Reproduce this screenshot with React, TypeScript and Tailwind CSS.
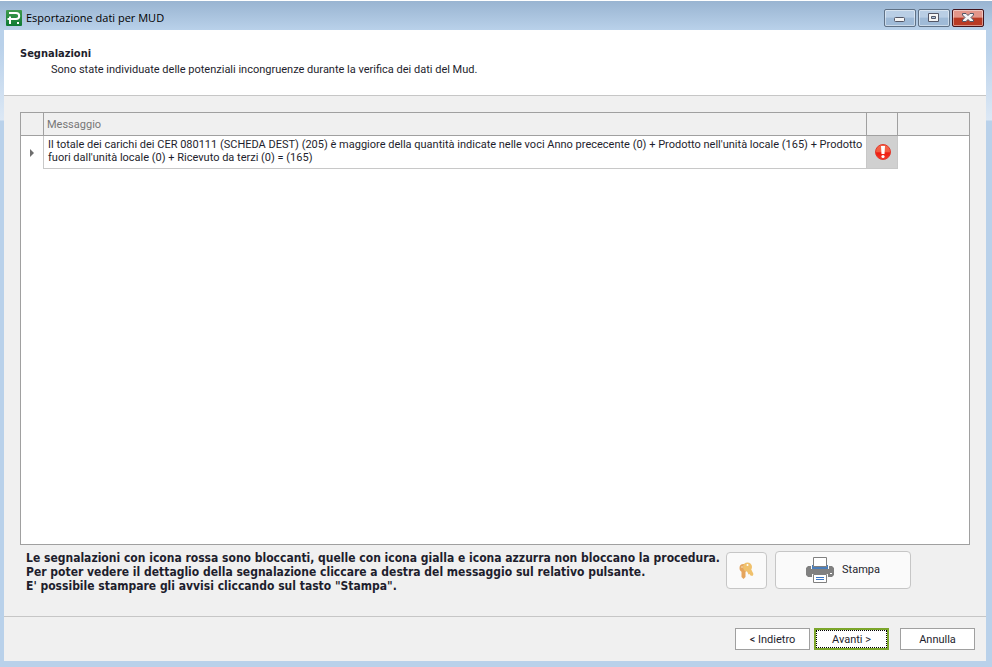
import type { ReactNode } from "react";

const PrinterIcon = () => (
  <svg width="28" height="26" viewBox="0 0 28 26" aria-hidden="true">
    <path d="M2 9h24l2 2v7l-2 2H2l-2-2v-7z" fill="#808080" />
    <path d="M5 8h18v4H5z" fill="#fafafa" />
    <path d="M6 8h16v4H6z" fill="#4a7ebb" />
    <path d="M7.5.5h13v9h-13z" fill="#fff" stroke="#808080" />
    <path d="M6 17h16v3H6z" fill="#fafafa" />
    <path d="M7.5 17.5h13v8h-13z" fill="#fff" stroke="#808080" />
    <path d="M10 20h8v1h-8zM10 22h8v1h-8z" fill="#3a76c4" />
    <path d="M24 16h2v1h-2z" fill="#fff" />
  </svg>
);

const KeysIcon = () => (
  <svg width="16" height="18" viewBox="0 0 16 18" aria-hidden="true">
    <circle cx="4.5" cy="6" r="4" fill="#e5a45c" />
    <path d="M2.5 8h4v7l-2 2-2-2z" fill="#e5a45c" />
    <circle cx="8.5" cy="5" r="4.5" fill="#f0c16c" />
    <path d="M7.5 8l4-2 3 6-1 2-2-.5-1-1.5-1 .5z" fill="#f0c16c" />
    <circle cx="8.5" cy="3" r="1" fill="#fff" />
    <circle cx="3" cy="5" r=".8" fill="#f8e3c8" />
  </svg>
);

const ErrorIcon = () => (
  <svg width="16" height="16" viewBox="0 0 16 16" role="img" aria-label="Bloccante">
    <defs>
      <linearGradient id="err" x1="0" y1="0" x2="0" y2="1">
        <stop offset="0" stopColor="#f4694c" />
        <stop offset=".5" stopColor="#f25a40" />
        <stop offset=".55" stopColor="#ee1c10" />
        <stop offset="1" stopColor="#f23a2a" />
      </linearGradient>
    </defs>
    <circle cx="8" cy="8" r="7.5" fill="url(#err)" stroke="#e2382c" />
    <path d="M6 2h4l-.5 8h-3z" fill="#fff" />
    <circle cx="8" cy="12.5" r="1.6" fill="#fff" />
  </svg>
);

const AppLogo = () => (
  <svg width="16" height="16" viewBox="0 0 16 16" aria-hidden="true">
    <defs>
      <linearGradient id="logo" x1="0" y1="0" x2="0" y2="1">
        <stop offset="0" stopColor="#3f9a4c" />
        <stop offset="1" stopColor="#0e7a35" />
      </linearGradient>
    </defs>
    <rect width="16" height="16" rx="1" fill="url(#logo)" />
    <path d="M3 3h7q3.2 0 3.2 3T10 9H1.5" fill="none" stroke="#fff" strokeWidth="2" />
    <path d="M4 6.5V14" stroke="#fff" strokeWidth="2" />
    <path d="M11 12h2v2h-2z" fill="#fff" />
  </svg>
);

const captionBase =
  "flex h-[18px] w-8 items-center justify-center rounded-[2px] border shadow-[inset_0_0_0_1px_rgba(255,255,255,0.45)]";
const captionBlue = `${captionBase} border-[#5f7186] bg-linear-to-b from-[#b9cee5] from-45% to-[#9fbad7] to-50%`;
const captionRed = `${captionBase} border-[#43141c] bg-linear-to-b from-[#e2968a] from-45% to-[#b93a24] to-50%`;

const TitleBar = () => (
  <header className="flex h-[29px] items-center gap-1 pt-1 pr-0.5 pl-0.5">
    <AppLogo />
    <h1 className="flex-1 font-['Open_Sans',sans-serif] text-[11px] leading-4 text-black">
      Esportazione dati per MUD
    </h1>
    <div className="flex gap-0.5">
      <button aria-label="Riduci" className={captionBlue}>
        <svg width="12" height="10" viewBox="0 0 12 10">
          <rect x=".5" y="4.5" width="10" height="4" rx="1" fill="#f5f5f5" stroke="#535666" />
        </svg>
      </button>
      <button aria-label="Ingrandisci" className={captionBlue}>
        <svg width="12" height="10" viewBox="0 0 12 10">
          <path d="M.5.5h10v8H.5zM3.5 3.5v2h4v-2z" fillRule="evenodd" fill="#f5f5f5" stroke="#535666" />
        </svg>
      </button>
      <button aria-label="Chiudi" className={captionRed}>
        <svg width="12" height="10" viewBox="0 0 12 10">
          <path
            d="M.5.5H4l2 2 2-2h3.5V2L9 4.5 11.5 7v1.5H8l-2-2-2 2H.5V7L3 4.5.5 2z"
            fill="#f5f5f5"
            stroke="#535666"
          />
        </svg>
      </button>
    </div>
  </header>
);

const MessageGrid = () => (
  <div className="flex-1 border border-[#a0a0a0] bg-white">
    <table className="w-full table-fixed border-separate border-spacing-0 text-left">
      <colgroup>
        <col className="w-[23px]" />
        <col />
        <col className="w-[31px]" />
        <col className="w-[71px]" />
      </colgroup>
      <thead>
        <tr className="h-[23px] bg-[#f0f0f0]">
          <th className="border-r border-b border-[#a0a0a0]" />
          <th scope="col" className="border-r border-b border-[#a0a0a0] px-[3px] pt-0.5 font-normal text-[#777]">
            Messaggio
          </th>
          <th className="border-r border-b border-[#a0a0a0]" />
          <th className="border-b border-[#a0a0a0]" />
        </tr>
      </thead>
      <tbody>
        <tr className="h-[33px]">
          <td className="border-r border-[#c8c8c8]">
            <svg width="4" height="8" viewBox="0 0 4 8" className="mx-auto" aria-hidden="true">
              <path d="M0 0l4 4-4 4z" fill="#6e6e6e" />
            </svg>
          </td>
          <td className="border-r border-b border-[#c8c8c8] pl-1 align-top leading-[13px]">
            <p className="pt-0.5">
              Il totale dei carichi dei CER 080111 (SCHEDA DEST) (205) è maggiore della quantità indicate nelle
              voci Anno prececente (0) + Prodotto nell'unità locale (165) + Prodotto fuori dall'unità locale (0) +
              Ricevuto da terzi (0) = (165)
            </p>
          </td>
          <td className="border-r border-b border-[#c8c8c8] bg-[#d0d0d0] pl-0.5">
            <div className="flex justify-center">
              <ErrorIcon />
            </div>
          </td>
          <td />
        </tr>
      </tbody>
    </table>
  </div>
);

const WizardButton = ({ children }: { children: ReactNode }) => (
  <button className="h-[22px] w-[75px] border border-[#a0a0a0] bg-white pt-0.5">{children}</button>
);

export default function App() {
  return (
    <div className="flex min-h-screen flex-col border-t border-white bg-[linear-gradient(to_bottom,#99b4d1_0,#b9d1ea_29px,#b9d1ea_45px,#dce8f5_119px,#b9d1ea_120px)] pr-1.5 pb-1.5 pl-1 font-[Roboto,sans-serif] text-[11px] text-[#1e1e2d]">
      <TitleBar />
      <main className="flex flex-1 flex-col bg-[#f0f0f0]">
        <section className="h-[66px] border-b border-[#c6c6c6] bg-white px-4 pt-4 leading-4">
          <h2 className="font-['DejaVu_Sans_Condensed','DejaVu_Sans',sans-serif] font-bold">Segnalazioni</h2>
          <p className="pl-[31px]">
            Sono state individuate delle potenziali incongruenze durante la verifica dei dati del Mud.
          </p>
        </section>
        <section className="flex flex-1 flex-col px-4 pt-4">
          <MessageGrid />
          <div className="flex h-[71px] items-start gap-2 pt-1.5 pl-1.5">
            <p className="w-[692px] font-['DejaVu_Sans_Condensed','DejaVu_Sans',sans-serif] text-[12px] leading-[14px] font-bold whitespace-nowrap">
              Le segnalazioni con icona rossa sono bloccanti, quelle con icona gialla e icona azzurra non bloccano
              la procedura.
              <br />
              Per poter vedere il dettaglio della segnalazione cliccare a destra del messaggio sul relativo pulsante.
              <br />
              E' possibile stampare gli avvisi cliccando sul tasto "Stampa".
            </p>
            <button
              aria-label="Chiavi"
              className="mt-px flex h-[37px] w-[41px] items-center justify-center rounded-[4px] border border-[#c6c6c6] bg-[#fafafa]"
            >
              <KeysIcon />
            </button>
            <button className="flex h-[38px] w-[136px] items-center justify-center gap-2 rounded-[4px] border border-[#c6c6c6] bg-[#fafafa]">
              <PrinterIcon />
              Stampa
            </button>
          </div>
        </section>
        <footer className="flex h-[45px] items-center justify-end border-t border-[#c6c6c6] pr-[11px]">
          <WizardButton>&lt; Indietro</WizardButton>
          <button className="mr-[11px] ml-1 h-[22px] w-[75px] border-2 border-[#7ca62b] bg-white">
            <span className="block h-full border border-dotted border-black leading-[18px]">Avanti &gt;</span>
          </button>
          <WizardButton>Annulla</WizardButton>
        </footer>
      </main>
    </div>
  );
}
